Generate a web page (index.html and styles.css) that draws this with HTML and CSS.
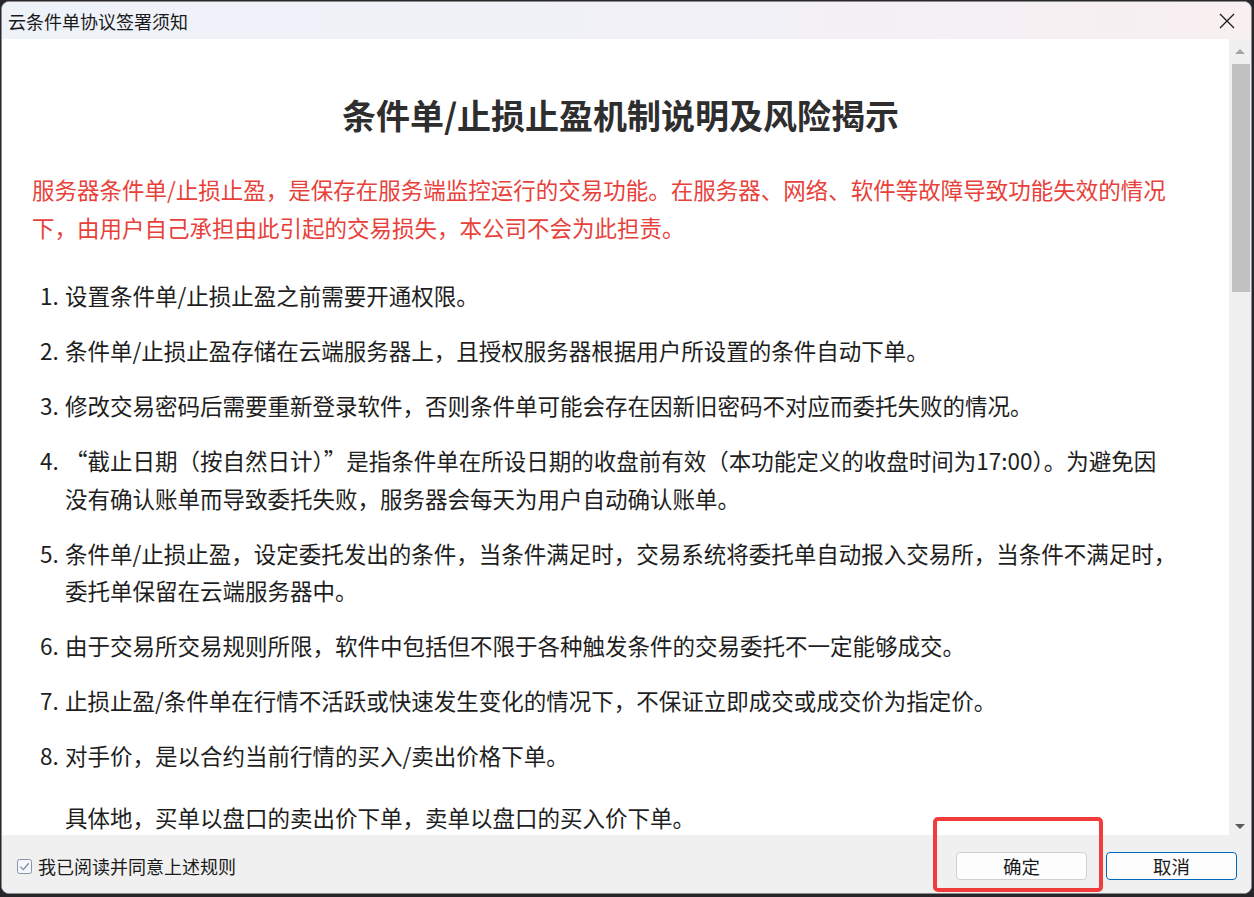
FILE: index.html
```html
<!DOCTYPE html>
<html lang="zh-CN">
<head>
    <meta charset="UTF-8">
    <title>云条件单协议签署须知</title>
    <link rel="stylesheet" href="styles.css">
</head>
<body>
    <div class="window">
        <div class="titlebar">
            <span class="title">云条件单协议签署须知</span>
            <svg class="close" width="16" height="16" viewBox="0 0 16 16">
                <path d="M1 1 L15 15 M15 1 L1 15" stroke="#1a1a1a" stroke-width="1.3" fill="none"/>
            </svg>
        </div>

        <div class="main">
            <div class="content">
                <h1>条件单/止损止盈机制说明及风险揭示</h1>
                <p class="risk">服务器条件单/止损止盈，是保存在服务端监控运行的交易功能。在服务器、网络、软件等故障导致功能失效的情况<br>下，由用户自己承担由此引起的交易损失，本公司不会为此担责。</p>

                <ol class="rules">
                    <li><span class="num">1.</span><div class="text">设置条件单/止损止盈之前需要开通权限。</div></li>
                    <li><span class="num">2.</span><div class="text">条件单/止损止盈存储在云端服务器上，且授权服务器根据用户所设置的条件自动下单。</div></li>
                    <li><span class="num">3.</span><div class="text">修改交易密码后需要重新登录软件，否则条件单可能会存在因新旧密码不对应而委托失败的情况。</div></li>
                    <li><span class="num">4.</span><div class="text">“截止日期（按自然日计）”是指条件单在所设日期的收盘前有效（本功能定义的收盘时间为17:00）。为避免因<br>没有确认账单而导致委托失败，服务器会每天为用户自动确认账单。</div></li>
                    <li><span class="num">5.</span><div class="text">条件单/止损止盈，设定委托发出的条件，当条件满足时，交易系统将委托单自动报入交易所，当条件不满足时，<br>委托单保留在云端服务器中。</div></li>
                    <li><span class="num">6.</span><div class="text">由于交易所交易规则所限，软件中包括但不限于各种触发条件的交易委托不一定能够成交。</div></li>
                    <li><span class="num">7.</span><div class="text">止损止盈/条件单在行情不活跃或快速发生变化的情况下，不保证立即成交或成交价为指定价。</div></li>
                    <li><span class="num">8.</span><div class="text">对手价，是以合约当前行情的买入/卖出价格下单。
                        <p class="sub">具体地，买单以盘口的卖出价下单，卖单以盘口的买入价下单。</p>
                    </div></li>
                </ol>
            </div>

            <div class="scrollbar">
                <div class="arrow-box"><span class="arrow up"></span></div>
                <div class="track"><div class="thumb"></div></div>
                <div class="arrow-box"><span class="arrow down"></span></div>
            </div>
        </div>

        <div class="footer">
            <label class="agree">
                <svg class="check" width="15" height="15" viewBox="0 0 15 15">
                    <rect x="0.5" y="0.5" width="14" height="14" rx="2" fill="#f5f7fb" stroke="#8793a6"/>
                    <path d="M3.2 7.6 L6.2 10.6 L11.8 4.2" stroke="#7f8ca3" stroke-width="1.3" fill="none"/>
                </svg>
                我已阅读并同意上述规则
            </label>
            <div class="actions">
                <button class="btn">确定</button>
                <button class="btn cancel">取消</button>
            </div>
        </div>

        <div class="highlight"></div>
    </div>
</body>
</html>
```

FILE: styles.css
```css
body {
    margin: 0;
    background: #26262b;
    font-family: "Noto Sans CJK SC", "Noto Sans", sans-serif;
    color: #1e1e1e;
    overflow: hidden;
}
.window {
    position: relative;
    box-sizing: border-box;
    width: 1251px;
    height: 893px;
    margin: 1px 0 0 1px;
    border: 1px solid #8c8c8c;
    border-radius: 8px;
    overflow: hidden;
    display: flex;
    flex-direction: column;
    background: #fff;
}
.titlebar {
    height: 37px;
    flex: none;
    display: flex;
    align-items: center;
    justify-content: space-between;
    padding: 0 16px 0 6px;
    background: linear-gradient(90deg, #eef2f9 0%, #f1f1f7 55%, #f8eff0 100%);
}
.title {
    font-size: 18px;
    color: #1a1a1a;
}
.close { display: block; }

.main {
    height: 796px;
    flex: none;
    display: flex;
}
.content {
    flex: 1;
    overflow: hidden;
    padding: 0 20px 0 30px;
    background: #fff;
}
h1 {
    margin: 54px 0 0;
    text-align: center;
    font-size: 34px;
    line-height: 44px;
    font-weight: bold;
    color: #2e2e2e;
}
.risk {
    margin: 33px 0 0;
    color: #e8413b;
    font-size: 22.5px;
    line-height: 38px;
}
.rules {
    list-style: none;
    margin: 31px 0 0;
    padding: 0 0 0 8px;
    font-size: 22.5px;
    line-height: 37.5px;
    color: #1e1e1e;
}
.rules li {
    display: flex;
    margin-bottom: 17.5px;
}
.num {
    flex: none;
    width: 25px;
}
.text { flex: 1; }
.sub { margin: 24.5px 0 0; }

.scrollbar {
    width: 22px;
    flex: none;
    display: flex;
    flex-direction: column;
    background: #f0f0f0;
}
.arrow-box {
    height: 25px;
    flex: none;
    display: flex;
    align-items: center;
    justify-content: center;
}
.arrow {
    width: 0;
    height: 0;
    border-left: 5px solid transparent;
    border-right: 5px solid transparent;
}
.arrow.up { border-bottom: 5px solid #a5a5a5; }
.arrow.down { border-top: 5px solid #5a5a5a; margin-top: 8px; }
.track {
    flex: 1;
    padding: 0 1px 0 3px;
}
.thumb {
    height: 228px;
    background: #c1c1c1;
}

.footer {
    height: 58px;
    flex: none;
    box-sizing: border-box;
    padding: 4px 14px 0 15px;
    display: flex;
    align-items: center;
    justify-content: space-between;
    background: #f0f0f0;
}
.agree {
    display: flex;
    align-items: center;
    gap: 6px;
    font-size: 18px;
    color: #1a1a1a;
}
.check { display: block; }
.actions {
    display: flex;
    gap: 19px;
}
.btn {
    box-sizing: border-box;
    width: 131px;
    height: 28px;
    padding: 0;
    border: 1px solid #d0d0d0;
    border-radius: 4px;
    background: #fdfdfd;
    font-family: inherit;
    font-size: 18.5px;
    line-height: 26px;
    color: #1a1a1a;
}
.cancel { border-color: #0067c0; }
.highlight {
    position: absolute;
    left: 931px;
    top: 815px;
    box-sizing: border-box;
    width: 170px;
    height: 75px;
    border: 4px solid #f23b3b;
    border-radius: 5px;
}
```
